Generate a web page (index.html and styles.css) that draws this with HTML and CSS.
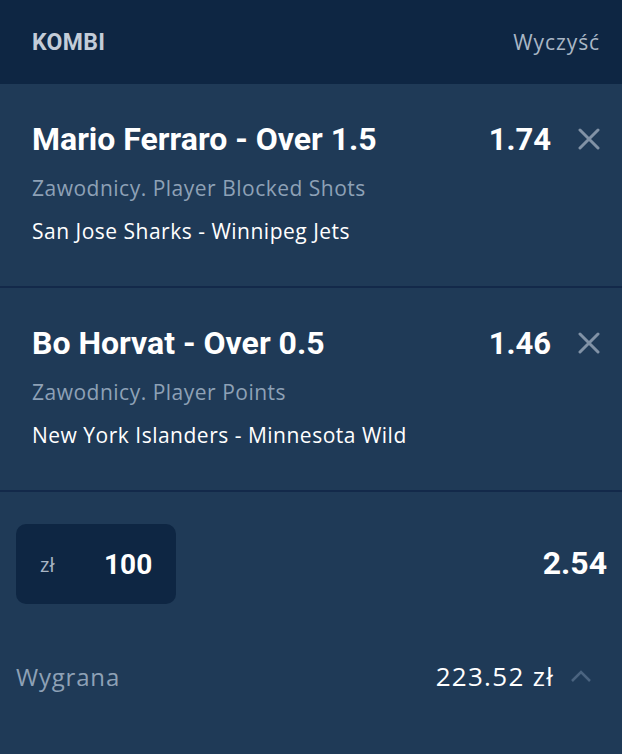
FILE: index.html
```html
<!DOCTYPE html>
<html lang="pl">
<head>
  <meta charset="UTF-8" />
  <meta name="viewport" content="width=device-width, initial-scale=1" />
  <title>Kupon</title>
  <link rel="stylesheet" href="styles.css">
</head>
<body>
  <header class="slip-head">
    <div class="slip-type">KOMBI</div>
    <a href="#" class="clear">Wyczyść</a>
  </header>

  <main>
    <section class="bet">
      <div class="bet-top">
        <h2 class="bet-name">Mario Ferraro - Over 1.5</h2>
        <span class="bet-odds">1.74</span>
        <button class="remove" aria-label="Usuń">
          <svg width="22" height="22" viewBox="0 0 22 22"><path d="M2 2L20 20M20 2L2 20" stroke="currentColor" stroke-width="3" stroke-linecap="round"/></svg>
        </button>
      </div>
      <p class="bet-market">Zawodnicy. Player Blocked Shots</p>
      <p class="bet-event">San Jose Sharks - Winnipeg Jets</p>
    </section>

    <section class="bet">
      <div class="bet-top">
        <h2 class="bet-name">Bo Horvat - Over 0.5</h2>
        <span class="bet-odds">1.46</span>
        <button class="remove" aria-label="Usuń">
          <svg width="22" height="22" viewBox="0 0 22 22"><path d="M2 2L20 20M20 2L2 20" stroke="currentColor" stroke-width="3" stroke-linecap="round"/></svg>
        </button>
      </div>
      <p class="bet-market">Zawodnicy. Player Points</p>
      <p class="bet-event">New York Islanders - Minnesota Wild</p>
    </section>

    <section class="summary">
      <div class="stake-row">
        <div class="stake">
          <span class="currency">zł</span>
          <span class="amount">100</span>
        </div>
        <span class="total-odds">2.54</span>
      </div>
      <div class="win-row">
        <span class="win-label">Wygrana</span>
        <span class="win-value">223.52 zł</span>
        <svg class="chevron" width="22" height="14" viewBox="0 0 22 14"><path d="M2 12L11 3L20 12" fill="none" stroke="currentColor" stroke-width="2.5"/></svg>
      </div>
    </section>
  </main>
</body>
</html>
```

FILE: styles.css
```css
* {
  box-sizing: border-box;
  margin: 0;
  padding: 0;
}
body {
  background: #1f3a57;
  color: #fff;
  font-family: "Open Sans", sans-serif;
  width: 622px;
  height: 754px;
  overflow: hidden;
}

.slip-head {
  background: #0e2643;
  height: 84px;
  display: flex;
  justify-content: space-between;
  align-items: center;
  padding: 0 22px 0 32px;
}
.slip-type {
  font-family: Roboto, sans-serif;
  font-weight: 700;
  font-size: 23px;
  color: #c3ccd8;
  letter-spacing: 0.3px;
}
.clear {
  color: #a9b6c5;
  font-size: 21px;
  letter-spacing: 0.9px;
  text-decoration: none;
}

.bet {
  height: 204px;
  padding: 20px 22px 0 32px;
  border-bottom: 2px solid #13294a;
}
.bet-top {
  display: flex;
  align-items: center;
  height: 70px;
}
.bet-name {
  flex: 1;
  font-family: Roboto, sans-serif;
  font-weight: 700;
  font-size: 32px;
}
.bet-odds {
  font-family: Roboto, sans-serif;
  font-weight: 700;
  font-size: 31px;
  margin-right: 27px;
}
.remove {
  background: none;
  border: none;
  color: #8192a6;
  display: flex;
}
.bet-market {
  color: #8ea1b6;
  font-size: 21px;
  letter-spacing: 0.5px;
  line-height: 28px;
}
.bet-event {
  font-size: 21px;
  letter-spacing: 0.5px;
  line-height: 28px;
  margin-top: 15px;
}

.summary {
  padding: 32px 15px 0 16px;
}
.stake-row {
  display: flex;
  justify-content: space-between;
  align-items: center;
}
.stake {
  background: #0e2643;
  width: 160px;
  height: 80px;
  border-radius: 10px;
  display: flex;
  align-items: center;
  padding-left: 24px;
}
.currency {
  color: #a9b6c5;
  font-size: 20px;
  width: 64px;
}
.amount {
  font-family: Roboto, sans-serif;
  font-weight: 700;
  font-size: 28px;
}
.total-odds {
  font-family: Roboto, sans-serif;
  font-weight: 700;
  font-size: 32px;
  margin-top: -2px;
}
.win-row {
  display: flex;
  align-items: center;
  margin-top: 54px;
  padding-right: 15px;
}
.win-label {
  flex: 1;
  color: #8ea1b6;
  font-size: 24px;
  letter-spacing: 0.8px;
}
.win-value {
  font-size: 26px;
  letter-spacing: 1.3px;
  margin-right: 16px;
}
.chevron {
  color: #4b6480;
}
```
